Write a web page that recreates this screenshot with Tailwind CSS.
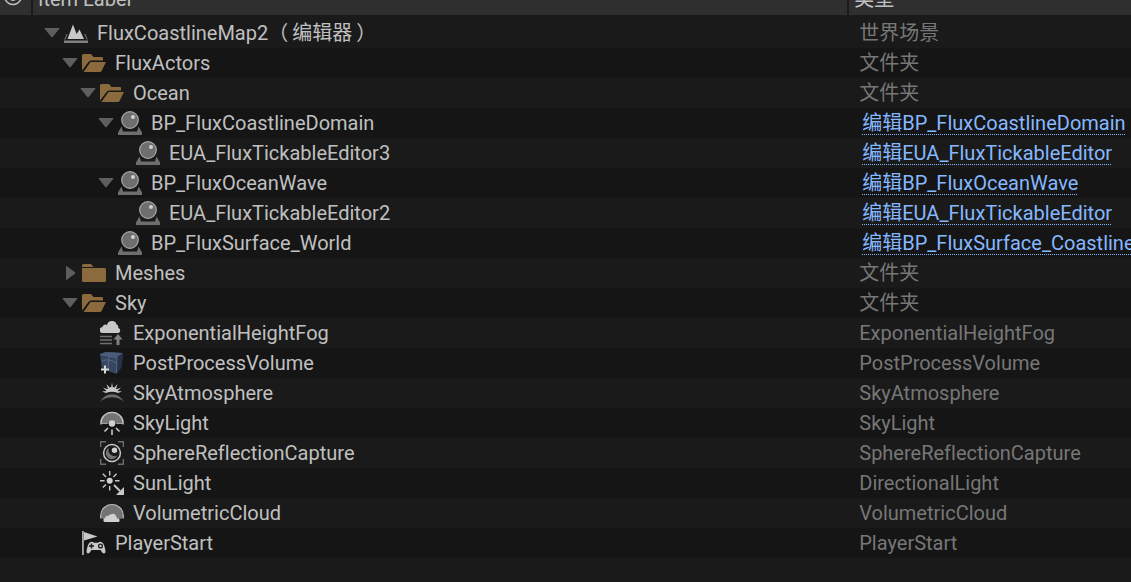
<!DOCTYPE html>
<html lang="zh-CN">
  <head>
    <meta charset="UTF-8" />
    <meta name="viewport" content="width=device-width, initial-scale=1.0" />
    <title>Outliner</title>
    <script src="https://cdn.jsdelivr.net/npm/@tailwindcss/browser@4"></script>
  </head>
  <body class="min-h-screen overflow-hidden bg-[#1a1a1a] font-[Roboto,'Noto_Sans_CJK_SC',sans-serif] text-[20px] text-[#c0c0c0] [font-variant-ligatures:none]">
    <!-- Icon set, all on a 24x24 grid -->
    <svg class="hidden" xmlns="http://www.w3.org/2000/svg">
      <symbol id="icon-world" viewBox="0 0 24 24">
        <path d="M0 19.500h24V22H0z" fill="#808080" />
        <path d="M3.200 13L.8 18.500M20.800 13l2.400 5.500" stroke="#808080" stroke-width="1" fill="none" />
        <path d="M3.500 18L9 3.500l3.600 9.500L15.500 8.500 20 18z" fill="#c8c8c8" />
      </symbol>
      <symbol id="icon-folder-open" viewBox="0 0 24 24">
        <path d="M0 19.500V4.500Q0 3 1.500 3H9l2.500 3H20q1 0 1 1v2.500H8.500L6.500 11z" fill="#8b6a3e" />
        <path d="M8.500 11H24L19.500 20q-.4 1-1.500 1H1.500z" fill="#8b6a3e" />
      </symbol>
      <symbol id="icon-folder" viewBox="0 0 24 24">
        <path d="M0 6V4.500Q0 3 1.500 3H9l2.500 3z" fill="#8b6a3e" />
        <path d="M0 7h22.500q1.500 0 1.500 1.500v11q0 1.500-1.500 1.500h-21Q0 21 0 19.500z" fill="#8b6a3e" />
      </symbol>
      <symbol id="icon-actor" viewBox="0 0 24 24">
        <path d="M3.500 15.500L0 21.500V24h24v-2.500L20.500 15.500 19 20.500H5z" fill="#6e6e6e" />
        <circle cx="12" cy="9" r="8.300" fill="#6e6e6e" stroke="#a8a8a8" stroke-width="1.200" />
        <circle cx="15" cy="6" r="2" fill="#d0d0d0" />
      </symbol>
      <symbol id="icon-fog" viewBox="0 0 24 24">
        <path d="M3 12a3 3 0 0 1-.5-6A2.800 2.800 0 0 1 7 4a5 5 0 0 1 9.700-.5 3 3 0 0 1 1.500 3.500A2.600 2.600 0 0 1 18.500 12z" fill="#c8c8c8" />
        <path d="M0 15.500h12M0 19h12M0 22.500h12" stroke="#707070" stroke-width="1.300" />
        <path d="M18 13l4.500 5.500h-3V24h-3v-5.500h-3z" fill="#808080" />
      </symbol>
      <symbol id="icon-volume" viewBox="0 0 24 24">
        <path d="M0 3l6-2 17 1-1.500 14-5 7L2 18z" fill="#37455f" />
        <path d="M0 3l6-2 17 1-6 4z" fill="#4c5b78" />
        <path d="M17 6l6-4-1.500 14-5 7z" fill="#27324a" />
        <path d="M0 3.500l17 3-.5 15M2 10q7-3 14 2M9 5L8 17" stroke="#56678a" stroke-width="1" fill="none" />
        <path d="M5 14.500v8M1 18.500h8" stroke="#d8d8d8" stroke-width="2" />
      </symbol>
      <symbol id="icon-atmosphere" viewBox="0 0 24 24">
        <path d="M0 20.500Q5 13.300 12 13.300t12 7.200Q18 16.300 12 16.300T0 20.500z" fill="#6c6c6c" />
        <path d="M6 12a6 6 0 0 1 12 0q-6-2.500-12 0z" fill="#c8c8c8" />
        <path d="M11 7l1-5.500L13 7zM8 8L6.500 3 10 7zM16 8l1.500-5L14 7zM6.500 10L3 6.500 8 8.500zM17.500 10L21 6.500 16 8.500zM6 12l-4-1.500 5-.5zM18 12l4-1.500-5-.5z" fill="#c8c8c8" />
      </symbol>
      <symbol id="icon-skylight" viewBox="0 0 24 24">
        <path d="M1 12.500a11 11 0 0 1 22 0z" fill="#747474" />
        <path d="M.8 13.500V12.500a11.200 11.200 0 0 1 22.400 0v1" fill="none" stroke="#c8c8c8" stroke-width="1.300" />
        <path d="M0 12.500h7.500M16.500 12.500H24" stroke="#a0a0a0" stroke-width="1" />
        <circle cx="12" cy="12.500" r="3.200" fill="#d0d0d0" />
        <path d="M12 18.500V24M8 17L4.500 20.500M16 17l3.500 3.500" stroke="#c8c8c8" stroke-width="1.600" />
      </symbol>
      <symbol id="icon-reflection" viewBox="0 0 24 24">
        <path d="M.7 6V.7H6M18 .7h5.300V6M23.300 18v5.300H18M6 23.300H.7V18" fill="none" stroke="#6c6c6c" stroke-width="1.400" />
        <circle cx="12" cy="12" r="8.400" fill="none" stroke="#c8c8c8" stroke-width="1.500" />
        <path d="M9 6.800A6 6 0 1 0 17.300 14.500 6 6 0 0 1 9 6.800z" fill="#747474" />
        <circle cx="14.500" cy="9.300" r="2.700" fill="#d0d0d0" />
      </symbol>
      <symbol id="icon-sun" viewBox="0 0 24 24">
        <circle cx="9.700" cy="9.700" r="3" fill="#d0d0d0" />
        <path d="M9.700 0v4.500M9.700 15v4.500M0 9.700h4.500M15 9.700h4.500M2.800 2.800L6 6M16.600 2.800L13.400 6M2.800 16.600L6 13.400" stroke="#c8c8c8" stroke-width="1.400" />
        <path d="M14 14l6 6" stroke="#c8c8c8" stroke-width="1.800" />
        <path d="M24 16v8h-8z" fill="#c8c8c8" />
      </symbol>
      <symbol id="icon-cloud" viewBox="0 0 24 24">
        <path d="M.7 17V14.500a11.300 11 0 0 1 22.600 0V17q-2 1-4.500 1H5q-2.500 0-4.300-1z" fill="#747474" />
        <path d="M.7 17.500v-3a11.300 11 0 0 1 22.600 0v3" fill="none" stroke="#b8b8b8" stroke-width="1.200" />
        <path d="M5.500 21a2 2 0 0 1-.3-4 2 2 0 0 1 3.300-1.700A1.800 1.800 0 0 1 11 13.600a3.200 3.200 0 0 1 5.200 1.900 2.200 2.200 0 0 1 .8 2.300 1.700 1.700 0 0 1 1.700 3.200z" fill="#d0d0d0" />
      </symbol>
      <symbol id="icon-player" viewBox="0 0 24 24">
        <path d="M.2 0h1.500v24H.2z" fill="#c8c8c8" />
        <path d="M2 1l13.500 4.500L2 9.500z" fill="#c8c8c8" />
        <path d="M8.500 11q2-.8 3.500.8h4q1.500-1.600 3.500-.8 2 .7 3 4.500 1.600 5.500.5 6.500-2 1.500-4.500-3h-9q-2.500 4.500-4.500 3-1.100-1 .5-6.500 1-3.800 3-4.500z" fill="#c8c8c8" />
        <path d="M9.500 12.500v5M7 15h5" stroke="#1a1a1a" stroke-width="1.400" />
        <circle cx="18.500" cy="15" r="1.900" fill="none" stroke="#1a1a1a" stroke-width="1.300" />
      </symbol>
    </svg>

    <table class="w-full table-fixed border-collapse">
      <colgroup>
        <col class="w-8" />
        <col />
        <col class="w-1/4" />
      </colgroup>
      <thead class="border-b-3 border-[#1a1a1a] bg-[#2f2f2f] text-left leading-[24px]">
        <tr>
          <th class="border-r-2 border-[#1a1a1a] p-0">
            <div class="flex h-[15px] items-end overflow-hidden">
              <svg class="mb-[9px] ml-[3px] h-5 w-5 shrink-0" viewBox="0 0 20 20" fill="none" stroke="#c0c0c0" role="img" aria-label="Visibility">
                <path d="M1 11Q4 4 10 4t9 7q-3 7.500-9 7.500T1 11z" stroke-width="1.500" />
                <circle cx="10" cy="11" r="3.500" fill="#c0c0c0" />
              </svg>
            </div>
          </th>
          <th class="border-r-2 border-[#1a1a1a] p-0 font-normal">
            <div class="flex h-[15px] items-end overflow-hidden pb-1 pl-[5px]">Item Label</div>
          </th>
          <th class="p-0 font-normal">
            <div class="flex h-[15px] items-end overflow-hidden pb-1 pl-[5px]">类型</div>
          </th>
        </tr>
      </thead>
      <tbody id="outliner-body"></tbody>
    </table>

    <script>
      const INDENT = 18;

      const items = [
        { level: 0, icon: "world", name: "FluxCoastlineMap2", suffix: "编辑器", type: "世界场景", open: true },
        { level: 1, icon: "folder-open", name: "FluxActors", type: "文件夹", open: true },
        { level: 2, icon: "folder-open", name: "Ocean", type: "文件夹", open: true },
        { level: 3, icon: "actor", name: "BP_FluxCoastlineDomain", link: "编辑BP_FluxCoastlineDomain", open: true },
        { level: 4, icon: "actor", name: "EUA_FluxTickableEditor3", link: "编辑EUA_FluxTickableEditor" },
        { level: 3, icon: "actor", name: "BP_FluxOceanWave", link: "编辑BP_FluxOceanWave", open: true },
        { level: 4, icon: "actor", name: "EUA_FluxTickableEditor2", link: "编辑EUA_FluxTickableEditor" },
        { level: 3, icon: "actor", name: "BP_FluxSurface_World", link: "编辑BP_FluxSurface_Coastline" },
        { level: 1, icon: "folder", name: "Meshes", type: "文件夹", open: false },
        { level: 1, icon: "folder-open", name: "Sky", type: "文件夹", open: true },
        { level: 2, icon: "fog", name: "ExponentialHeightFog", type: "ExponentialHeightFog" },
        { level: 2, icon: "volume", name: "PostProcessVolume", type: "PostProcessVolume" },
        { level: 2, icon: "atmosphere", name: "SkyAtmosphere", type: "SkyAtmosphere" },
        { level: 2, icon: "skylight", name: "SkyLight", type: "SkyLight" },
        { level: 2, icon: "reflection", name: "SphereReflectionCapture", type: "SphereReflectionCapture" },
        { level: 2, icon: "sun", name: "SunLight", type: "DirectionalLight" },
        { level: 2, icon: "cloud", name: "VolumetricCloud", type: "VolumetricCloud" },
        { level: 1, icon: "player", name: "PlayerStart", type: "PlayerStart" },
      ];

      const label = (item) => item.suffix ? `${item.name}（<span class="px-1">${item.suffix}</span>）` : item.name;

      const arrow = (item) => {
        if (item.open === undefined) return `<span class="w-4 shrink-0"></span>`;
        const path = item.open ? "M1 3h14q.8 0 .3.700L8.700 12q-.7.700-1.400 0L.7 3.700Q.2 3 1 3z" : "M4 1.500v13q0 .8.800.3L13 8.700q.7-.7 0-1.400L4.800 1.200Q4 .7 4 1.500z";
        return `<button type="button" aria-label="${item.name}" aria-expanded="${item.open}" class="w-4 shrink-0">
          <svg class="h-4 w-4" viewBox="0 0 16 16" fill="#5e5e5e"><path d="${path}" /></svg>
        </button>`;
      };

      document.getElementById("outliner-body").innerHTML = items
        .map((item) => `
          <tr class="even:bg-[#151515]">
            <td class="p-0"></td>
            <td class="p-0">
              <div class="flex h-[30px] items-center pl-3 whitespace-nowrap">
                <div class="flex items-center" style="margin-left: ${item.level * INDENT}px">
                  ${arrow(item)}
                  <svg class="ml-1 h-6 w-6 shrink-0"><use href="#icon-${item.icon}" /></svg>
                  <span class="ml-[9px] leading-[24px]">${label(item)}</span>
                </div>
              </div>
            </td>
            <td class="overflow-hidden p-0 leading-[24px] whitespace-nowrap">
              ${item.link
                ? `<a href="#" class="ml-[14px] text-[#86b8ff] underline decoration-dotted decoration-1 underline-offset-4 [text-decoration-skip-ink:none]">${item.link}</a>`
                : `<span class="ml-[11px] text-[#777777]">${item.type}</span>`}
            </td>
          </tr>`)
        .join("");
    </script>
  </body>
</html>
